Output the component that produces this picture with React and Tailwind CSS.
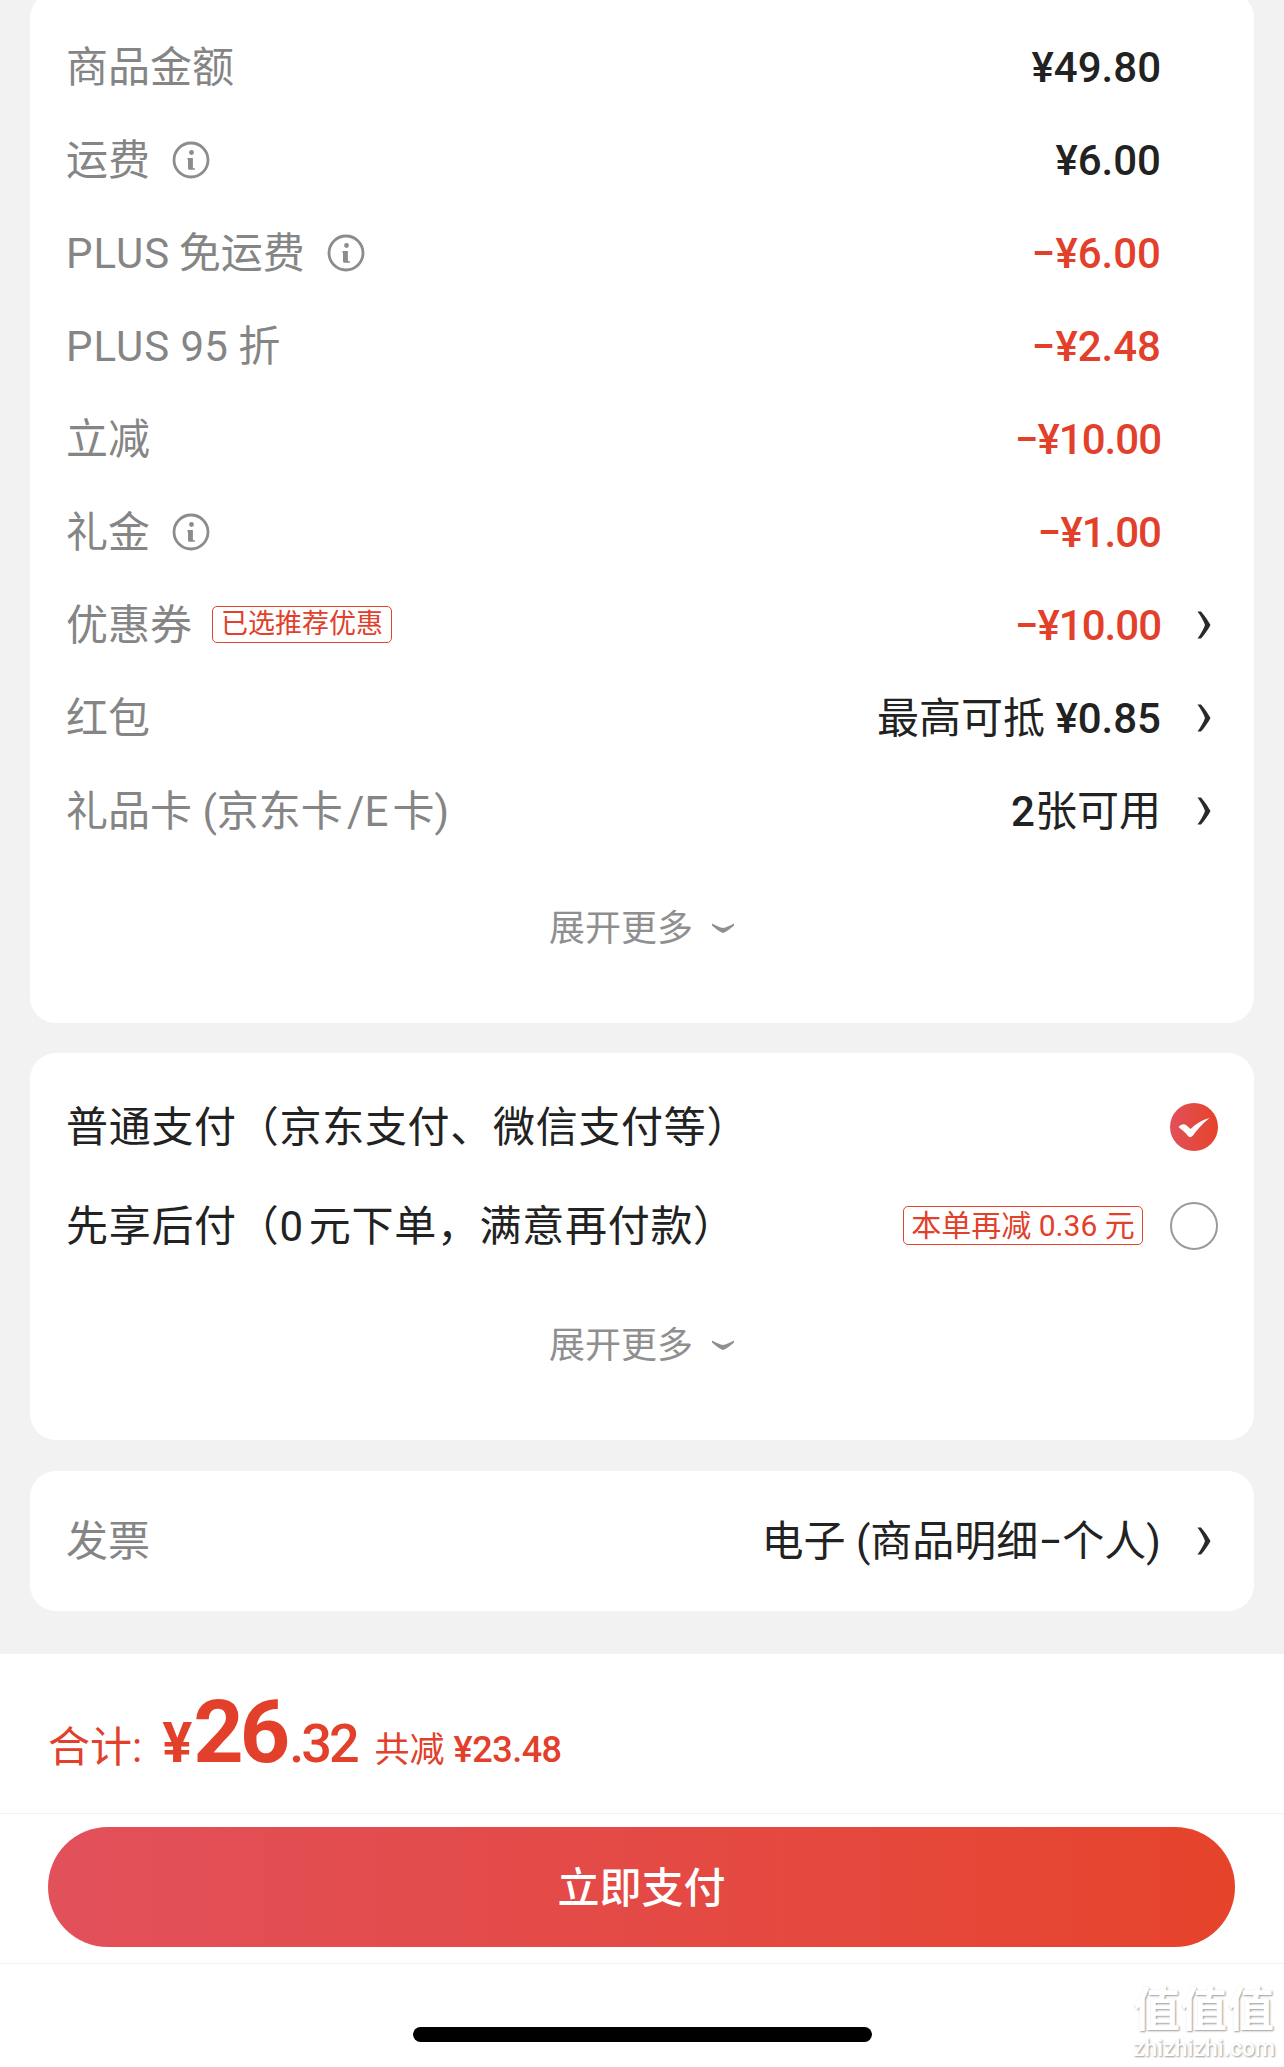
const GRAY = "text-[#858585]";

function InfoIcon() {
  return (
    <svg width="38" height="38" viewBox="0 0 38 38" className="shrink-0 ml-[22px]">
      <circle cx="19" cy="19" r="17" fill="none" stroke="#8c8c8c" strokeWidth="2.8" />
      <circle cx="19.5" cy="11.5" r="2.4" fill="#8c8c8c" />
      <path d="M15.5 17h5.4v9.2c0 .7.4 1 1 1h1v1.6h-5c-1.2 0-1.9-.7-1.9-1.9v-8.2h-.5z" fill="#8c8c8c" />
    </svg>
  );
}

function Chevron() {
  return (
    <svg width="14" height="28" viewBox="0 0 14 28">
      <path d="M0.5 0.5 L4 0.5 C8 5 11 9.5 13.5 14 C11 18.5 8 23 4 27.5 L0.5 27.5 C4 22.5 6.5 18.5 8 14 C6.5 9.5 4 5.5 0.5 0.5z" fill="#2a2a2a" />
    </svg>
  );
}

function Row({ label, info, tag, value, red, arrow }) {
  return (
    <div className="flex items-center h-[93px] pl-[36px] pr-[43px]">
      <span className={`pt-[2px] text-[42px] leading-none whitespace-pre ${GRAY}`}>{label}</span>
      {info && <InfoIcon />}
      {tag && (
        <span className="ml-[20px] h-[37px] px-[8px] flex items-center border border-[#e2452f] rounded-[5px] text-[27px] leading-none text-[#e2402a]">
          {tag}
        </span>
      )}
      <span className={`ml-auto pt-[2px] text-[42px] leading-none whitespace-pre ${red ? "text-[#e2402a]" : "text-[#222222]"}`}>
        {value}
      </span>
      <div className="w-[50px] flex justify-end">{arrow && <Chevron />}</div>
    </div>
  );
}

function Expand({ className }) {
  return (
    <div className={`flex items-center justify-center gap-[18px] h-[52px] ${className}`}>
      <span className="pt-[2px] text-[36px] leading-none text-[#8f8f8f]">展开更多</span>
      <svg width="24" height="12" viewBox="0 0 24 12">
        <path d="M1 1.5 C6 4 9 5.5 12 6 C15 5.5 18 4 23 1.5 L23 3.5 C19 7 15 10 12 11 C9 10 5 7 1 3.5z" fill="#8f8f8f" />
      </svg>
    </div>
  );
}

function Num({ tight, children }) {
  return <span className={tight ? "font-medium tracking-[-1px]" : "font-medium"}>{children}</span>;
}

function Plus() {
  return <span className="tracking-[1px]">PLUS</span>;
}

export default function App() {
  return (
    <div className="relative w-full h-[2067px] overflow-hidden bg-[#f2f2f2] font-['Roboto','Noto_Sans_CJK_SC',sans-serif]">
      {/* 金额明细 */}
      <section className="-mt-[8px] mx-[30px] pt-[28px] pb-[69px] bg-white rounded-[26px]">
        <Row label="商品金额" value={<Num>¥49.80</Num>} />
        <Row label="运费" info value={<Num>¥6.00</Num>} />
        <Row label={<><Plus />{"\u2009免运费"}</>} info value={<Num>−¥6.00</Num>} red />
        <Row label={<><Plus /> 95 折</>} value={<Num>−¥2.48</Num>} red />
        <Row label="立减" value={<Num tight>−¥10.00</Num>} red />
        <Row label="礼金" info value={<Num tight>−¥1.00</Num>} red />
        <Row label="优惠券" tag="已选推荐优惠" value={<Num tight>−¥10.00</Num>} red arrow />
        <Row label="红包" value={<>最高可抵 <Num>¥0.85</Num></>} arrow />
        <Row label={"礼品卡 (京东卡\u200a/E\u200a卡)"} value={<><Num>2</Num>张可用</>} arrow />
        <Expand className="mt-[45px]" />
      </section>

      {/* 支付方式 */}
      <section className="mt-[30px] mx-[30px] pt-[24px] pb-[69px] bg-white rounded-[26px]">
        <div className="flex items-center h-[99px] pl-[36px] pr-[36px]">
          <span className="pt-[2px] text-[42px] leading-none tracking-[0.7px] text-[#222222]">普通支付（京东支付、微信支付等）</span>
          <svg width="48" height="48" viewBox="0 0 48 48" className="ml-auto">
            <defs>
              <linearGradient id="chk" x1="0" x2="1" y1="0" y2="0">
                <stop offset="0" stopColor="#e2505a" />
                <stop offset="1" stopColor="#e6432a" />
              </linearGradient>
            </defs>
            <circle cx="24" cy="24" r="24" fill="url(#chk)" />
            <path d="M8.5 24 C11 21 14 20.5 16 22 L20.5 26 C26 20.5 32 17 39.5 15 C32 21 27 27 22.5 33 C21 34.5 19 34.5 18 33 C15.5 29.5 12 27 8.5 24z" fill="white" />
          </svg>
        </div>
        <div className="flex items-center h-[99px] pl-[36px] pr-[36px]">
          <span className="pt-[2px] text-[42px] leading-none tracking-[0.7px] text-[#222222] whitespace-pre">{"先享后付（0\u200a元下单，满意再付款）"}</span>
          <span className="ml-auto h-[39px] w-[240px] flex items-center justify-center border border-[#e2452f] rounded-[5px] text-[30px] leading-none text-[#e2402a] whitespace-pre">
            本单再减 0.36 元
          </span>
          <div className="ml-[27px] w-[48px] h-[48px] rounded-full border-2 border-[#9a9a9a]" />
        </div>
        <Expand className="mt-[44px]" />
      </section>

      {/* 发票 */}
      <section className="mt-[31px] mx-[30px] h-[140px] flex items-center pl-[36px] pr-[43px] bg-white rounded-[26px]">
        <span className={`pt-[2px] text-[42px] leading-none ${GRAY}`}>发票</span>
        <span className="ml-auto pt-[2px] text-[42px] leading-none text-[#222222] whitespace-pre">电子 (商品明细−个人)</span>
        <div className="w-[50px] flex justify-end"><Chevron /></div>
      </section>

      {/* 底部结算 */}
      <footer className="mt-[43px] bg-white h-[413px]">
        <div className="h-[160px] pl-[48px] pt-[34px] border-b border-[#f2f2f2] flex items-baseline text-[#e2402a]">
          <span className="text-[42px] leading-none">合计:</span>
          <span className="ml-[20px] text-[56px] leading-none font-bold">¥</span>
          <span className="ml-[1px] text-[88px] leading-none font-bold tracking-[-4px]">26</span>
          <span className="ml-[3px] text-[54px] leading-none font-medium tracking-[-3px]">.32</span>
          <span className="ml-[18px] text-[35px] leading-none">共减</span>
          <span className="ml-[9px] text-[36px] leading-none font-medium tracking-[-0.5px]">¥23.48</span>
        </div>
        <div className="h-[150px] px-[48px] pt-[13px] border-b border-[#f2f2f2]">
          <button className="w-[1187px] h-[120px] pt-[4px] rounded-full bg-linear-to-r from-[#e2505a] to-[#e6432a] text-white text-[42px] font-medium leading-none">
            立即支付
          </button>
        </div>
        <div className="pt-[63px] flex justify-center">
          <div className="w-[459px] h-[15px] rounded-full bg-black" />
        </div>
      </footer>

      {/* 水印 */}
      <div className="absolute left-[1133px] top-[1984px] w-[142px] text-white [text-shadow:1px_1px_2px_#9a9a9a]">
        <div className="text-[47px] leading-[52px] font-bold whitespace-nowrap">值值值</div>
        <div className="mt-[3px] text-[23px] leading-[20px] font-medium whitespace-nowrap">zhizhizhi.com</div>
      </div>
    </div>
  );
}
